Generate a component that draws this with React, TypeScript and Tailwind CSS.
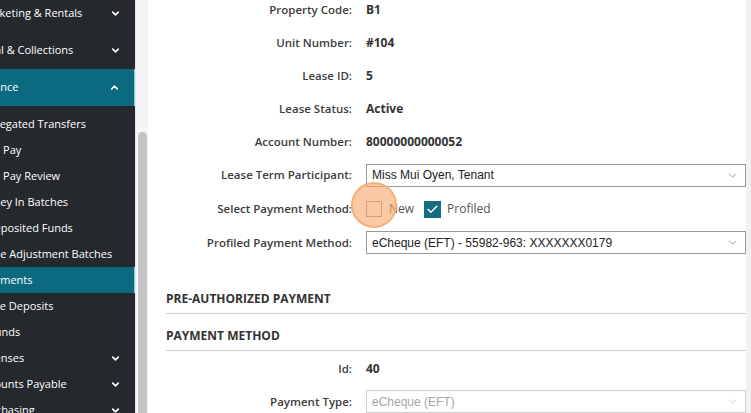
import { ChevronDown, ChevronUp, Check } from 'lucide-react'

const font = { fontFamily: '"Open Sans", "Noto Sans", sans-serif' }

type NavItem = { label: string; kind: 'head' | 'sub'; off: string; active?: boolean; chevron?: 'down' | 'up' }

// the sidebar is scrolled sideways in the shot, so labels start left of the edge
const NAV: NavItem[] = [
  { label: 'Marketing & Rentals', kind: 'head', off: 'ml-[-21px]', chevron: 'down' },
  { label: 'Legal & Collections', kind: 'head', off: 'ml-[-23px]', chevron: 'down' },
  { label: 'Finance', kind: 'head', off: 'ml-[-21px]', chevron: 'up', active: true },
  { label: 'Segregated Transfers', kind: 'sub', off: 'ml-[-23px]' },
  { label: 'Auto Pay', kind: 'sub', off: 'ml-[-24px]' },
  { label: 'Auto Pay Review', kind: 'sub', off: 'ml-[-24px]' },
  { label: 'Money In Batches', kind: 'sub', off: 'ml-[-23px]' },
  { label: 'Undeposited Funds', kind: 'sub', off: 'ml-[-27px]' },
  { label: 'Lease Adjustment Batches', kind: 'sub', off: 'ml-[-23px]' },
  { label: 'Payments', kind: 'sub', off: 'ml-[-18px]', active: true },
  { label: 'Make Deposits', kind: 'sub', off: 'ml-[-22px]' },
  { label: 'Refunds', kind: 'sub', off: 'ml-[-22px]' },
  { label: 'Expenses', kind: 'sub', off: 'ml-[-24px]', chevron: 'down' },
  { label: 'Accounts Payable', kind: 'sub', off: 'ml-[-23px]', chevron: 'down' },
  { label: 'Purchasing', kind: 'sub', off: 'ml-[-22px]', chevron: 'down' },
]

function Sidebar() {
  return (
    <div className="w-[135px] shrink-0 bg-[#25282d] overflow-hidden text-[11px] text-white" style={font}>
      {NAV.map(n => (
        <div
          key={n.label}
          className={`flex items-center justify-between pr-[14px] ${n.kind === 'head' ? 'h-[37px] -mt-[5px] mb-[5px]' : 'h-[26px]'} ${n.active ? 'bg-[#0b6a80] border-r border-[#7fd3e6]' : ''}`}
        >
          <span className={`whitespace-nowrap ${n.off}`}>{n.label}</span>
          {n.chevron === 'down' && <ChevronDown size={11} strokeWidth={3.5} className="shrink-0" />}
          {n.chevron === 'up' && <ChevronUp size={11} strokeWidth={3.5} className="shrink-0" />}
        </div>
      ))}
    </div>
  )
}

function Row({ label, children, h = 'h-[33px]' }: { label: string; children: React.ReactNode; h?: string }) {
  return (
    <div className={`flex items-center ${h}`}>
      <div className="w-[186px] shrink-0 text-right text-[11.5px] font-semibold text-[#3d3d3d]">{label}</div>
      <div className="ml-[14px] flex-1 flex items-center">{children}</div>
    </div>
  )
}

function Select({ value, disabled }: { value: string; disabled?: boolean }) {
  return (
    <div
      className={`w-full h-[23px] flex items-center justify-between pl-[5px] pr-[6px] border ${disabled ? 'border-[#cfcfcf] text-[#a5a5a5]' : 'border-[#9a9a9a] text-[#222]'} bg-white text-[12px]`}
      style={{ fontFamily: '"Liberation Sans", Arial, sans-serif' }}
    >
      <span>{value}</span>
      <ChevronDown size={13} strokeWidth={1.5} className={disabled ? 'text-[#c8c8c8]' : 'text-[#8a8a8a]'} />
    </div>
  )
}

function Section({ title }: { title: string }) {
  return (
    <div className="h-[37px] flex items-end pb-[5px] border-b border-[#d0d0d0] text-[12px] font-bold text-[#333]">
      {title}
    </div>
  )
}

const val = 'text-[12px] font-bold text-[#333]'

export default function App() {
  return (
    <div className="flex w-[751px] h-[413px] overflow-hidden bg-white" style={font}>
      <Sidebar />
      <div className="w-[13px] shrink-0 bg-[#f5f5f5] border-l border-[#e8e8e8] flex flex-col">
        <div className="h-[132px]" />
        <div className="ml-[2px] w-[9px] flex-1 rounded-t-[5px] bg-[#c3c3c3]" />
      </div>
      <div className="flex-1 pl-[18px]">
        <div className="-mt-[7px]">
          <Row label="Property Code:"><span className={val}>B1</span></Row>
          <Row label="Unit Number:"><span className={val}>#104</span></Row>
          <Row label="Lease ID:"><span className={val}>5</span></Row>
          <Row label="Lease Status:"><span className={val}>Active</span></Row>
          <Row label="Account Number:"><span className={val}>80000000000052</span></Row>
          <Row label="Lease Term Participant:" h="h-[34px]"><Select value="Miss Mui Oyen, Tenant" /></Row>
          <Row label="Select Payment Method:" h="h-[34px]">
            <div className="relative flex items-center text-[12px] text-[#555]">
              <div className="w-[16px] h-[16px] border border-[#9a9a9a] bg-white" />
              <div className="absolute left-[-15px] top-[-18px] w-[46px] h-[46px] rounded-full bg-[#f8a566]/60 border-2 border-[#f6b07a]" />
              <span className="ml-[7px]">New</span>
              <div className="ml-[10px] w-[17px] h-[17px] bg-[#146e80] flex items-center justify-center">
                <Check size={13} strokeWidth={3} className="text-white" />
              </div>
              <span className="ml-[6px]">Profiled</span>
            </div>
          </Row>
          <Row label="Profiled Payment Method:"><Select value="eCheque (EFT) - 55982-963: XXXXXXX0179" /></Row>
        </div>
        <div className="mt-[18px]">
          <Section title="PRE-AUTHORIZED PAYMENT" />
          <Section title="PAYMENT METHOD" />
        </div>
        <div className="mt-[1px]">
          <Row label="Id:"><span className={val}>40</span></Row>
          <Row label="Payment Type:"><Select value="eCheque (EFT)" disabled /></Row>
        </div>
      </div>
      <div className="w-[5px] shrink-0 bg-[#eef1f6]" />
    </div>
  )
}
